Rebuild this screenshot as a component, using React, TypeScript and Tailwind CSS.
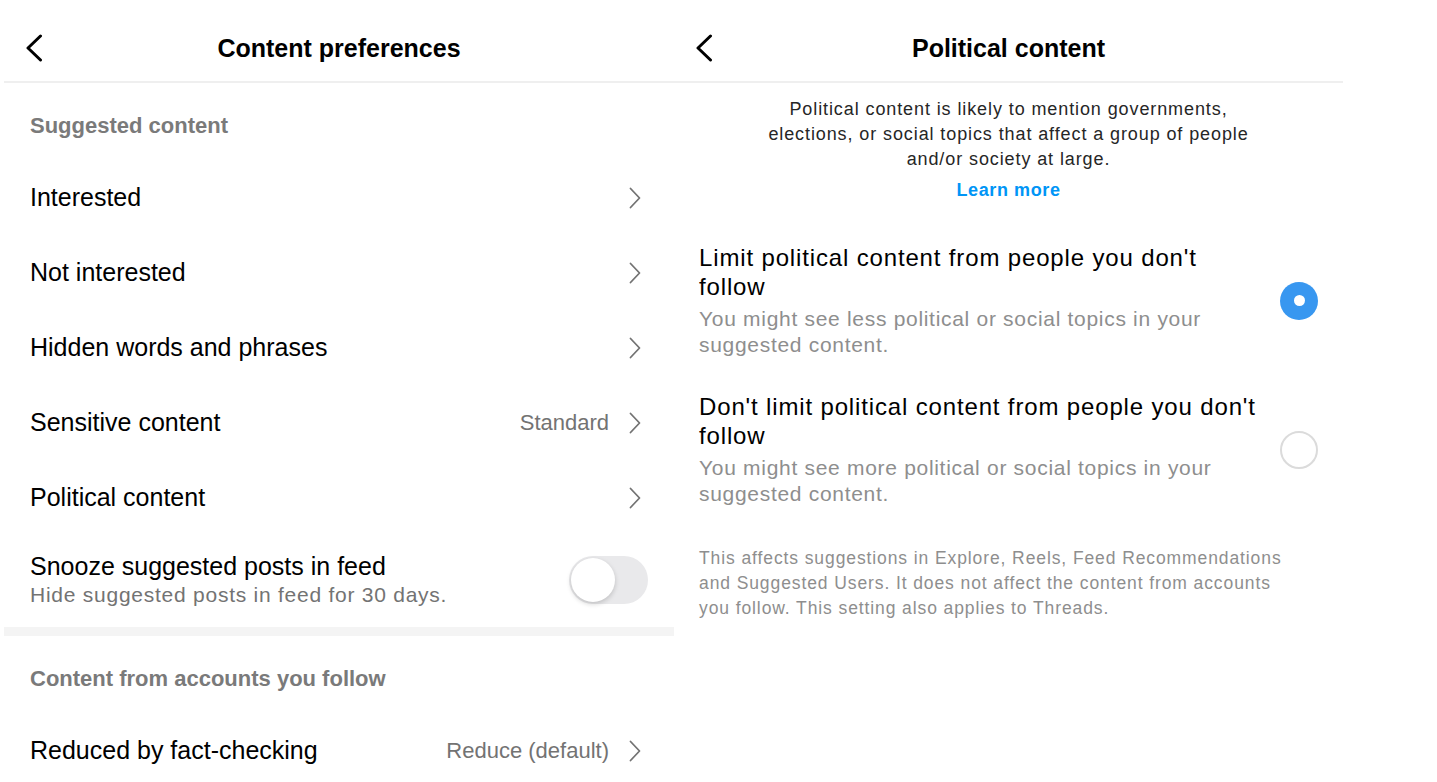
import React from 'react';

const font = { fontFamily: '"Liberation Sans", Arial, sans-serif' };

function BackChevron() {
  return (
    <svg width="18" height="28" viewBox="0 0 18 28" fill="none">
      <path d="M15.5 2 L3 14 L15.5 26" stroke="#000" strokeWidth="3" strokeLinecap="round" strokeLinejoin="round" />
    </svg>
  );
}

function RowChevron() {
  return (
    <svg width="12" height="22" viewBox="0 0 12 22" fill="none">
      <path d="M1.5 1.5 L10.5 11 L1.5 20.5" stroke="#737373" strokeWidth="1.8" strokeLinecap="round" strokeLinejoin="round" />
    </svg>
  );
}

function Header({ title }: { title: string }) {
  return (
    <div className="grid grid-cols-[1fr_auto_1fr] items-center h-[83px] pt-[15px] px-[21px] border-b-2 border-[#efefef]">
      <div className="justify-self-start flex items-center">
        <BackChevron />
      </div>
      <h1 className="text-[25px] leading-[28px] font-bold text-black">{title}</h1>
      <div />
    </div>
  );
}

function SectionTitle({ children }: { children: React.ReactNode }) {
  return (
    <div className="pt-[29px] pb-[20px] px-[26px] text-[22px] leading-[28px] font-semibold text-[#7a7a7a]">
      {children}
    </div>
  );
}

function NavRow({ label, value }: { label: string; value?: string }) {
  return (
    <div className="h-[75px] flex items-center justify-between pl-[26px] pr-[33px]">
      <span className="text-[25px] text-black">{label}</span>
      <div className="flex items-center gap-[20px]">
        {value && <span className="text-[22px] text-[#737373]">{value}</span>}
        <RowChevron />
      </div>
    </div>
  );
}

function ContentPreferences() {
  return (
    <div className="w-[670px] ml-[4px] shrink-0">
      <Header title="Content preferences" />
      <SectionTitle>Suggested content</SectionTitle>
      <NavRow label="Interested" />
      <NavRow label="Not interested" />
      <NavRow label="Hidden words and phrases" />
      <NavRow label="Sensitive content" value="Standard" />
      <NavRow label="Political content" />
      <div className="flex items-center justify-between pl-[26px] pr-[26px] pt-[16px] pb-[18px]">
        <div>
          <div className="text-[25px] leading-[30px] text-black">Snooze suggested posts in feed</div>
          <div className="text-[21px] leading-[28px] tracking-[0.75px] text-[#737373]">Hide suggested posts in feed for 30 days.</div>
        </div>
        <div className="w-[79px] h-[48px] rounded-full bg-[#e9e9eb] p-[2px] flex items-center">
          <div className="w-[44px] h-[44px] rounded-full bg-white shadow-[0_2px_5px_rgba(0,0,0,0.18)]" />
        </div>
      </div>
      <div className="h-[9px] bg-[#f4f4f4]" />
      <SectionTitle>Content from accounts you follow</SectionTitle>
      <NavRow label="Reduced by fact-checking" value="Reduce (default)" />
    </div>
  );
}

function RadioOption({ title, desc, selected }: { title: string[]; desc: string[]; selected: boolean }) {
  return (
    <div className="flex items-center justify-between gap-[20px]">
      <div className="w-[570px]">
        <div className="text-[24px] leading-[29px] tracking-[0.85px] text-black">
          {title[0]}
          <br />
          {title[1]}
        </div>
        <div className="mt-[5px] text-[21px] leading-[26px] tracking-[0.7px] text-[#8e8e8e]">
          {desc[0]}
          <br />
          {desc[1]}
        </div>
      </div>
      {selected ? (
        <div className="w-[38px] h-[38px] rounded-full bg-[#3897f0] flex items-center justify-center shrink-0">
          <div className="w-[11px] h-[11px] rounded-full bg-white" />
        </div>
      ) : (
        <div className="w-[38px] h-[38px] rounded-full border-2 border-[#dbdbdb] shrink-0" />
      )}
    </div>
  );
}

function PoliticalContent() {
  return (
    <div className="w-[669px] shrink-0">
      <Header title="Political content" />
      <div className="pt-[14px] text-center">
        <p className="text-[18px] leading-[25px] tracking-[0.9px] text-[#262626]">
          Political content is likely to mention governments,
          <br />
          elections, or social topics that affect a group of people
          <br />
          and/or society at large.
        </p>
        <div className="mt-[6px] text-[18px] leading-[25px] tracking-[0.6px] font-bold text-[#0095f6]">Learn more</div>
      </div>
      <div className="px-[25px] pt-[40px]">
        <RadioOption
          title={["Limit political content from people you don't", 'follow']}
          desc={['You might see less political or social topics in your', 'suggested content.']}
          selected
        />
        <div className="h-[34px]" />
        <RadioOption
          title={["Don't limit political content from people you don't", 'follow']}
          desc={['You might see more political or social topics in your', 'suggested content.']}
          selected={false}
        />
        <p className="mt-[39px] text-[17.5px] leading-[25px] tracking-[0.9px] text-[#8e8e8e]">
          This affects suggestions in Explore, Reels, Feed Recommendations
          <br />
          and Suggested Users. It does not affect the content from accounts
          <br />
          you follow. This setting also applies to Threads.
        </p>
      </div>
    </div>
  );
}

export default function App() {
  return (
    <div className="w-[1437px] h-[782px] overflow-hidden bg-white flex" style={font}>
      <ContentPreferences />
      <PoliticalContent />
    </div>
  );
}
